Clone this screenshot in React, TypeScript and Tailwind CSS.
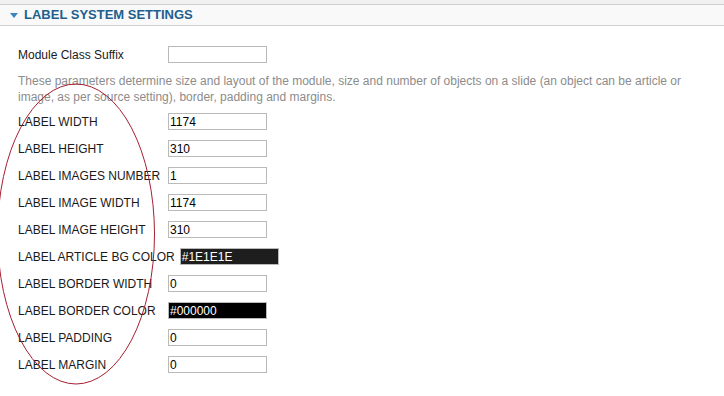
import React from "react";

const rows: { label: string; value: string; dark?: string }[] = [
  { label: "LABEL WIDTH", value: "1174" },
  { label: "LABEL HEIGHT", value: "310" },
  { label: "LABEL IMAGES NUMBER", value: "1" },
  { label: "LABEL IMAGE WIDTH", value: "1174" },
  { label: "LABEL IMAGE HEIGHT", value: "310" },
  { label: "LABEL ARTICLE BG COLOR", value: "#1E1E1E", dark: "bg-[#1e1e1e]" },
  { label: "LABEL BORDER WIDTH", value: "0" },
  { label: "LABEL BORDER COLOR", value: "#000000", dark: "bg-[#000000]" },
  { label: "LABEL PADDING", value: "0" },
  { label: "LABEL MARGIN", value: "0" },
];

function Field({ value, dark }: { value: string; dark?: string }) {
  return (
    <div
      className={
        "w-[99px] h-[17px] border border-[#bababa] pl-[1px] flex items-center text-[12px] leading-none " +
        (dark ? dark + " text-white" : "bg-white text-black")
      }
    >
      {value}
    </div>
  );
}

export default function App() {
  return (
    <div className="relative w-[724px] h-[396px] overflow-hidden bg-white font-['Liberation_Sans',Arial,sans-serif]">
      <div className="h-[4px] bg-[#f0f0f0]" />
      <div className="h-[22px] border-y border-[#d0d0d0] bg-[#f9f9f9] flex items-center pl-[10px]">
        <svg width="8" height="6" viewBox="0 0 8 6" className="mr-[6px] mt-[1px]">
          <polygon points="0,0 8,0 4,5" fill="#3a86bd" />
        </svg>
        <h3 className="text-[13px] font-bold text-[#215f8d]">LABEL SYSTEM SETTINGS</h3>
      </div>
      <div className="pl-[18px] pr-[14px]">
        <div className="mt-[20px] h-[17px] flex items-center">
          <label className="min-w-[150px] pr-[5px] text-[12px] text-[#1a1a1a]">Module Class Suffix</label>
          <Field value="" />
        </div>
        <p className="mt-[10px] text-[12px] leading-[16px] text-[#8c8c8c]">
          These parameters determine size and layout of the module, size and number of objects on a slide (an object can be article or image, as per source setting), border, padding and margins.
        </p>
        <div className="mt-[8px] flex flex-col gap-[10px]">
          {rows.map((r) => (
            <div key={r.label} className="h-[17px] flex items-center">
              <label className="min-w-[150px] pr-[5px] text-[12px] text-[#1a1a1a] whitespace-nowrap">{r.label}</label>
              <Field value={r.value} dark={r.dark} />
            </div>
          ))}
        </div>
      </div>
      <svg className="absolute left-0 top-0 pointer-events-none" width="724" height="396">
        <ellipse cx="76" cy="234" rx="78.5" ry="150" fill="none" stroke="#a51f30" strokeWidth="1" />
      </svg>
    </div>
  );
}
